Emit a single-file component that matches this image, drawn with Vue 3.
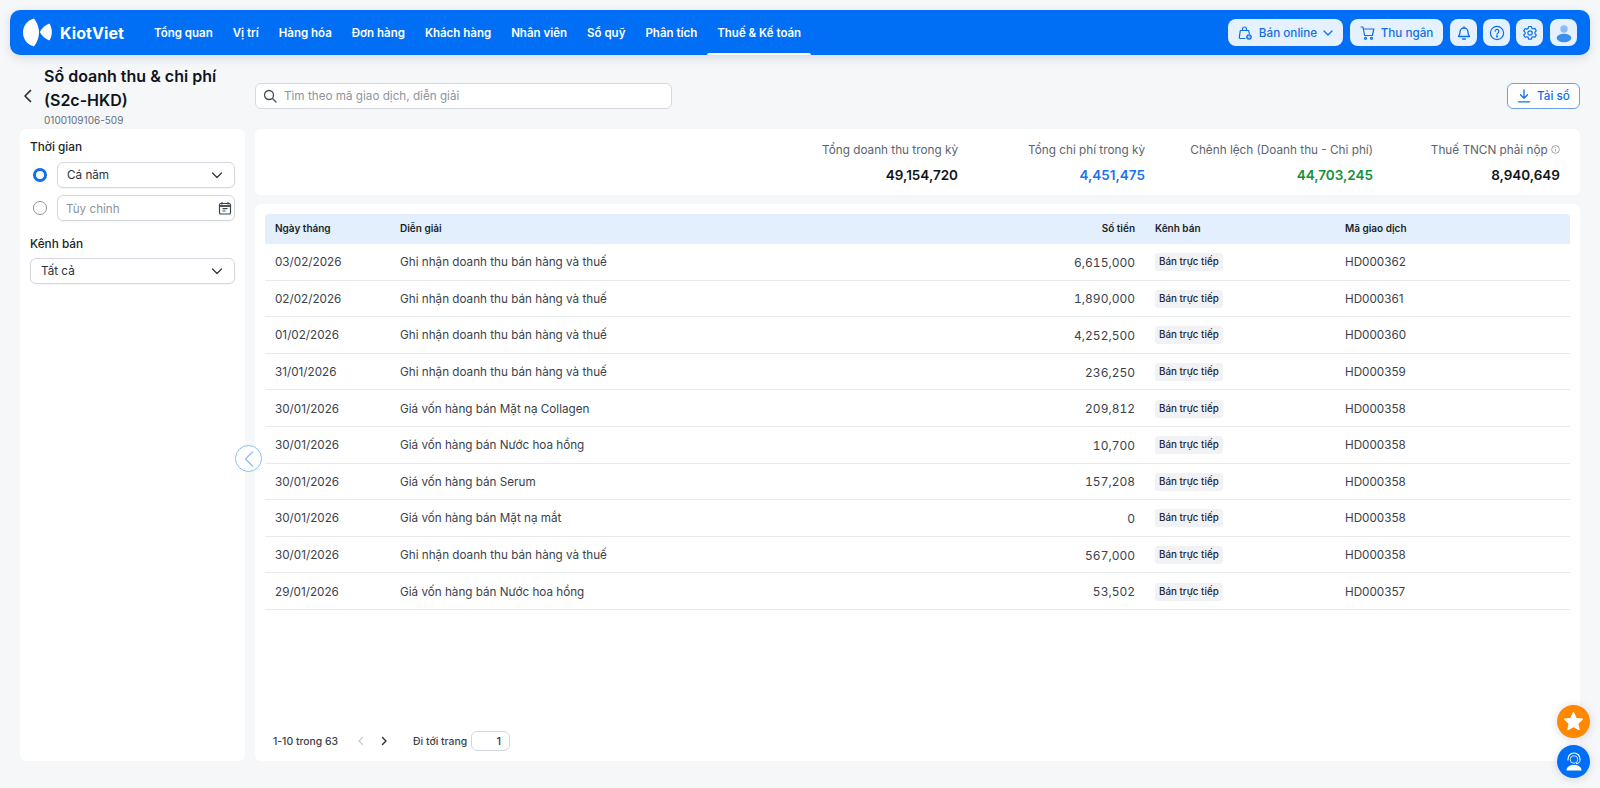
<script setup>
const nav = ['Tổng quan','Vị trí','Hàng hóa','Đơn hàng','Khách hàng','Nhân viên','Sổ quỹ','Phân tích','Thuế & Kế toán']
const thu = 'Ghi nhận doanh thu bán hàng và thuế'
const rows = [
  ['03/02/2026',thu,'6,615,000','HD000362'],
  ['02/02/2026',thu,'1,890,000','HD000361'],
  ['01/02/2026',thu,'4,252,500','HD000360'],
  ['31/01/2026',thu,'236,250','HD000359'],
  ['30/01/2026','Giá vốn hàng bán Mặt nạ Collagen','209,812','HD000358'],
  ['30/01/2026','Giá vốn hàng bán Nước hoa hồng','10,700','HD000358'],
  ['30/01/2026','Giá vốn hàng bán Serum','157,208','HD000358'],
  ['30/01/2026','Giá vốn hàng bán Mặt nạ mắt','0','HD000358'],
  ['30/01/2026',thu,'567,000','HD000358'],
  ['29/01/2026','Giá vốn hàng bán Nước hoa hồng','53,502','HD000357'],
]
</script>

<template>
  <div class="page">
    <header class="topbar">
      <svg class="logo" width="30" height="30" viewBox="0 0 30 30">
        <path d="M11 .5C4 2.500 0 8 0 14.500S4 26.500 11 28.500C14.500 24 16 19 16 14.500S14.500 5 11 .5Z" fill="#fff"/>
        <path d="M26.500 5.500C22 7 18.500 10.500 16.800 14c1.700 3.500 5.200 7 9.700 8.500 1.500-2.500 2.300-5.500 2.300-8.500s-.8-6-2.300-8.500Z" fill="#fff"/>
      </svg>
      <span class="brand">KiotViet</span>
      <nav class="nav">
        <a v-for="(n,i) in nav" :key="n" class="nav-item" :class="{active:i===8}">{{ n }}</a>
      </nav>
      <div class="top-actions">
        <button class="tbtn online">
          <svg class="online-ic" width="16" height="16" viewBox="0 0 16 16" fill="none" stroke="#0f6fe8" stroke-width="1.200"><path d="M3.300 5.500h8.400l.6 3M8 13.500H3.300a1 1 0 0 1-1-1.100l1-6.900M5.500 5.500V4a2 2 0 0 1 4 0v1.500" stroke-linecap="round"/><circle cx="12" cy="12" r="2.800" fill="#0f6fe8" stroke="none"/><path d="M10.500 12h3M12 10.500v3" stroke="#fff" stroke-width=".8"/></svg>
          <span>Bán online</span>
          <svg width="12" height="12" viewBox="0 0 12 12" fill="none" stroke="#0f6fe8" stroke-width="1.300" stroke-linecap="round" stroke-linejoin="round"><path d="M2 4l4 4 4-4"/></svg>
        </button>
        <button class="tbtn cashier">
          <svg width="16" height="16" viewBox="0 0 16 16" fill="none" stroke="#0f6fe8" stroke-width="1.200" stroke-linecap="round" stroke-linejoin="round"><path d="M1 2h2l1.600 8.500h7.800l1.400-6.500H3.500"/><circle cx="5.500" cy="13.300" r="1"/><circle cx="11.500" cy="13.300" r="1"/></svg>
          <span>Thu ngân</span>
        </button>
        <button class="tbtn square">
          <svg width="16" height="16" viewBox="0 0 16 16" fill="none" stroke="#0f6fe8" stroke-width="1.300" stroke-linecap="round" stroke-linejoin="round"><path d="M2.500 11.500c1-1 1.500-2 1.500-4.500a4 4 0 0 1 8 0c0 2.500.5 3.500 1.500 4.500z"/><path d="M6.500 14h3"/><path d="M8 3V1.800"/></svg>
        </button>
        <button class="tbtn square">
          <svg width="16" height="16" viewBox="0 0 16 16" fill="none" stroke="#0f6fe8" stroke-width="1.200" stroke-linecap="round"><circle cx="8" cy="8" r="6.600"/><path d="M6.100 6.300a1.900 1.900 0 1 1 2.900 1.600c-.6.400-1 .7-1 1.400"/><circle cx="8" cy="11.400" r=".5" fill="#0f6fe8"/></svg>
        </button>
        <button class="tbtn square">
          <svg width="16" height="16" viewBox="0 0 16 16" fill="none" stroke="#0f6fe8" stroke-width="1.200" stroke-linejoin="round"><path d="M6.600 1.500h2.800l.4 1.800 1.300.7 1.800-.6 1.400 2.400-1.400 1.300v1.500l1.400 1.300-1.400 2.400-1.800-.6-1.300.7-.4 1.800H6.600l-.4-1.800-1.300-.7-1.800.6L1.700 10l1.400-1.300V7.200L1.700 5.900l1.400-2.400 1.800.6 1.300-.7z"/><circle cx="8" cy="8" r="2.200"/></svg>
        </button>
        <button class="tbtn square avatar">
          <svg width="20" height="20" viewBox="0 0 20 20"><circle cx="10" cy="6" r="3.700" fill="#8cbcf3"/><ellipse cx="10" cy="15" rx="7.300" ry="4.200" fill="#3d8dec"/></svg>
        </button>
      </div>
    </header>

    <div class="toolbar">
      <div class="title-wrap">
        <svg class="back" width="16" height="16" viewBox="0 0 16 16" fill="none" stroke="#27303a" stroke-width="1.700" stroke-linecap="round" stroke-linejoin="round"><path d="M10.500 2.500L5 8l5.500 5.500"/></svg>
        <div>
          <h1>Sổ doanh thu &amp; chi phí<br>(S2c-HKD)</h1>
          <div class="sub">0100109106-509</div>
        </div>
      </div>
      <label class="search">
        <svg width="14" height="14" viewBox="0 0 14 14" fill="none" stroke="#444c56" stroke-width="1.300" stroke-linecap="round"><circle cx="6" cy="6" r="4.500"/><path d="M9.500 9.500L13 13"/></svg>
        <span>Tìm theo mã giao dịch, diễn giải</span>
      </label>
      <button class="download">
        <svg width="14" height="14" viewBox="0 0 14 14" fill="none" stroke="#0f6fe8" stroke-width="1.300" stroke-linecap="round" stroke-linejoin="round"><path d="M7 1v8M3.500 5.800L7 9.300l3.500-3.500M1.500 12.800h11"/></svg>
        <span>Tải sổ</span>
      </button>
    </div>

    <main class="content">
      <aside class="filters">
        <div class="label">Thời gian</div>
        <div class="radio-row">
          <span class="radio on"></span>
          <div class="field">Cá năm
            <svg class="chev" width="14" height="14" viewBox="0 0 14 14" fill="none" stroke="#333" stroke-width="1.200" stroke-linecap="round" stroke-linejoin="round"><path d="M2.500 5l4.500 4.500L11.500 5"/></svg>
          </div>
        </div>
        <div class="radio-row second">
          <span class="radio"></span>
          <div class="field muted">Tùy chỉnh
            <svg class="cal" width="14" height="14" viewBox="0 0 14 14" fill="none" stroke="#3a4350" stroke-width="1.200"><rect x="1.500" y="2.500" width="11" height="10.500" rx="1.300"/><path d="M1.500 5h11" stroke-width="1.800"/><path d="M4 1v2.500M10 1v2.500M4.500 7.700h5M4.500 10h3"/></svg>
          </div>
        </div>
        <div class="label channel">Kênh bán</div>
        <div class="field wide">Tất cả
          <svg class="chev" width="14" height="14" viewBox="0 0 14 14" fill="none" stroke="#333" stroke-width="1.200" stroke-linecap="round" stroke-linejoin="round"><path d="M2.500 5l4.500 4.500L11.500 5"/></svg>
        </div>
      </aside>

      <section class="main">
        <div class="summary">
          <div class="stat s1"><div class="stat-label">Tổng doanh thu trong kỳ</div><div class="stat-value">49,154,720</div></div>
          <div class="stat s2"><div class="stat-label">Tổng chi phí trong kỳ</div><div class="stat-value blue">4,451,475</div></div>
          <div class="stat s3"><div class="stat-label">Chênh lệch (Doanh thu - Chi phí)</div><div class="stat-value green">44,703,245</div></div>
          <div class="stat s4"><div class="stat-label">Thuế TNCN phải nộp
            <svg width="9" height="9" viewBox="0 0 10 10" fill="none" stroke="#8a929c" stroke-width=".9"><circle cx="5" cy="5" r="4.300"/><path d="M5 4.500v2.700M5 2.600v.8"/></svg></div><div class="stat-value">8,940,649</div></div>
        </div>

        <div class="table-card">
          <div class="trow thead">
            <div>Ngày tháng</div><div>Diễn giải</div><div class="num">Số tiền</div><div>Kênh bán</div><div>Mã giao dịch</div>
          </div>
          <div v-for="(r,i) in rows" :key="i" class="trow tbody">
            <div>{{ r[0] }}</div><div>{{ r[1] }}</div><div class="num amount">{{ r[2] }}</div>
            <div><span class="badge">Bán trực tiếp</span></div><div>{{ r[3] }}</div>
          </div>
          <div class="pager">
            <span class="count">1-10 trong 63</span>
            <svg class="pg first" width="10" height="10" viewBox="0 0 10 10" fill="none" stroke="#c4c9d0" stroke-width="1.200" stroke-linecap="round" stroke-linejoin="round"><path d="M6.500 1.500L3 5l3.500 3.500"/></svg>
            <svg class="pg" width="10" height="10" viewBox="0 0 10 10" fill="none" stroke="#27303a" stroke-width="1.400" stroke-linecap="round" stroke-linejoin="round"><path d="M3.500 1.500L7 5 3.500 8.500"/></svg>
            <span class="goto">Đi tới trang</span>
            <span class="page-input">1</span>
          </div>
        </div>
      </section>
    </main>

    <button class="collapse">
      <svg width="14" height="18" viewBox="0 0 14 18" fill="none" stroke="#8fbdf2" stroke-width="1.300" stroke-linecap="round" stroke-linejoin="round"><path d="M10.500 2L3.500 9l7 7"/></svg>
    </button>
    <button class="fab star">
      <svg width="21" height="21" viewBox="0 0 20 20"><path d="M10 1.800l2.500 5.300 5.800.7-4.300 4 1.200 5.700L10 14.600l-5.200 2.900L6 11.800l-4.300-4 5.800-.7z" fill="#fff" stroke="#fff" stroke-width="1.400" stroke-linejoin="round"/></svg>
    </button>
    <button class="fab support">
      <svg width="24" height="24" viewBox="0 0 24 24" fill="none"><circle cx="12" cy="9.500" r="3.800" stroke="#cfe2ff" stroke-width="1"/><path d="M6 10.500V9a6 6 0 0 1 12 0v1.500" stroke="#fff" stroke-width="1.100"/><path d="M18 10.500c0 1.800-1.500 3-4 3.200" stroke="#fff" stroke-width="1"/><path d="M4.500 20.500c0-3.600 3.200-5.500 7.500-5.500s7.500 1.900 7.500 5.500z" fill="#fff"/></svg>
    </button>
  </div>
</template>

<style>
html, body { margin: 0; background: #f6f7f9; }
</style>

<style scoped>
.page {
  height: 788px; width: 1600px; overflow: hidden; position: relative; background: #f6f7f9;
  font-family: Inter, "Noto Sans", sans-serif; color: #1f2630; font-size: 11.7px;
  box-sizing: border-box; padding: 10px 10px 0; display: flex; flex-direction: column;
}
button { font-family: inherit; border: 0; padding: 0; cursor: pointer; }
.topbar {
  height: 45px; flex: none; background: #006ff5; border-radius: 10px; display: flex; align-items: center;
  padding: 0 13px 0 13px; box-shadow: 0 3px 10px rgba(30,50,90,.14); color: #fff;
}
.logo { flex: none; margin-right: 7px; }
.brand { font-size: 16px; font-weight: 700; width: 73px; letter-spacing: .1px; flex: none; }
.nav { display: flex; height: 100%; margin-left: 11px; }
.nav-item { display: flex; align-items: center; padding: 0 10px; font-size: 11.5px; font-weight: 600; position: relative; white-space: nowrap; }
.nav-item.active::after {
  content: ""; position: absolute; left: 0; right: 0; bottom: 0; height: 2px; background: #fff; border-radius: 2px 2px 0 0;
}
.top-actions { margin-left: auto; display: flex; gap: 6px; align-items: center; }
.tbtn {
  height: 27px; border-radius: 8px; background: #e6f1ff; color: #0f6fe8; display: flex; align-items: center;
  justify-content: center; font-size: 11.7px; font-weight: 500; gap: 5px;
}
.online { width: 115px; margin-right: 1px; } .cashier { width: 93px; margin-right: 1px; } .square { width: 27px; }
.online-ic { margin-right: 1px; }
.avatar { margin-left: 1px; }

.toolbar { display: flex; align-items: center; height: 74px; box-sizing: border-box; padding: 6px 10px 0; flex: none; }
.title-wrap { width: 235px; display: flex; align-items: center; flex: none; }
.back { margin-right: 8px; flex: none; margin-top: 1px; }
h1 { margin: 0; font-size: 16px; line-height: 24px; font-weight: 600; color: #10151c; padding-top: 1px; }
.sub { font-size: 10px; line-height: 14px; color: #666e78; margin-top: 1px; }
.search {
  width: 417px; height: 26px; box-sizing: border-box; border: 1px solid #d5d9df; border-radius: 6px; background: #fff;
  display: flex; align-items: center; gap: 7px; padding-left: 7px; font-size: 11.7px; color: #8d949e; margin-top: 1px;
}
.download {
  margin-left: auto; width: 73px; height: 26px; background: #fff; border: 1px solid #6f9fe8; border-radius: 6px; color: #0f6fe8;
  display: flex; align-items: center; justify-content: center; gap: 6px; font-size: 11.7px; font-weight: 500; margin-top: 1px;
}

.content { display: flex; gap: 10px; padding: 0 10px; height: 632px; flex: none; }
.filters { width: 225px; flex: none; background: #fff; border-radius: 6px; box-sizing: border-box; padding: 11px 10px; }
.label { font-size: 11.8px; font-weight: 500; color: #1a1f27; line-height: 15px; }
.channel { margin-top: 16px; }
.radio-row { display: flex; align-items: center; margin-top: 7px; }
.radio { width: 14px; height: 14px; box-sizing: border-box; border: 1px solid #8b929c; border-radius: 50%; margin: 0 10px 0 3px; flex: none; }
.radio.on { border: 3.500px solid #0f6fe8; }
.field {
  position: relative; flex: 1; height: 26px; box-sizing: border-box; border: 1px solid #d3d7dd; border-radius: 6px; background: #fff;
  display: flex; align-items: center; padding-left: 9px; font-size: 11.7px; color: #2a313b; box-shadow: 0 1px 2px rgba(20,30,50,.05);
}
.field.muted { color: #8d949e; padding: 1px 0 0 8px; }
.field.wide { margin-top: 6px; padding-left: 10px; }
.chev { position: absolute; right: 10px; top: 5px; }
.cal { position: absolute; right: 2px; top: 5px; }

.main { flex: 1; display: flex; flex-direction: column; gap: 9px; min-width: 0; }
.summary {
  height: 66px; flex: none; background: #fff; border-radius: 6px; display: flex; justify-content: flex-end; padding-right: 20px; box-sizing: border-box;
}
.stat { text-align: right; padding-top: 14px; box-sizing: border-box; }
.s1 { width: 300px; } .s2 { width: 187px; } .s3 { width: 228px; } .s4 { width: 187px; }
.stat-label { font-size: 11.75px; line-height: 15px; color: #5c646e; white-space: nowrap; }
.stat-value { font-size: 13.5px; line-height: 18px; font-weight: 600; color: #10151c; margin-top: 8px; }
.blue { color: #1d72f0; } .green { color: #139038; }

.table-card { flex: 1; background: #fff; border-radius: 6px; padding: 10px; position: relative; box-sizing: border-box; }
.trow { display: grid; grid-template-columns: 125px 1fr 130px 190px 235px; align-items: center; }
.trow > div { padding: 0 10px; }
.thead { height: 30px; padding-bottom: 2px; box-sizing: border-box; background: #e3effd; border-radius: 4px 4px 0 0; font-size: 10px; font-weight: 600; color: #1a1f27; }
.tbody { height: 36.6px; padding-top: 1px; box-sizing: border-box; border-bottom: 1px solid #e6e9ed; font-size: 11.7px; color: #3b424c; }
.num { text-align: right; }
.amount { font-size: 12px; font-variant-numeric: tabular-nums; }
.badge {
  display: inline-block; padding: 0 4px; line-height: 18px; height: 18px; border-radius: 3px; background: #f0f2f5;
  font-size: 9.8px; font-weight: 500; color: #1f2630;
}
.pager { position: absolute; left: 18px; bottom: 10px; height: 20px; display: flex; align-items: center; font-size: 10.4px; font-weight: 500; color: #39414c; }
.pg { margin-left: 13px; } .pg.first { margin-left: 18px; }
.goto { margin-left: 24px; margin-right: 4px; font-weight: 500; }
.page-input {
  width: 39px; height: 20px; box-sizing: border-box; border: 1px solid #d3d7dd; border-radius: 6px; background: #fff; text-align: right; padding-right: 8px; line-height: 18px; font-size: 11px;
}

.collapse {
  position: absolute; left: 235px; top: 445px; width: 27px; height: 27px; border-radius: 50%; border: 1px solid #8fbdf2;
  background: rgba(255,255,255,.9); display: flex; align-items: center; justify-content: center; box-sizing: border-box;
}
.fab { position: absolute; left: 1557px; width: 33px; height: 33px; border-radius: 50%; display: flex; align-items: center; justify-content: center; box-shadow: 0 1px 8px rgba(30,50,90,.18); }
.star { top: 705px; background: #ff8800; }
.support { top: 745px; background: #006ff5; }
</style>
